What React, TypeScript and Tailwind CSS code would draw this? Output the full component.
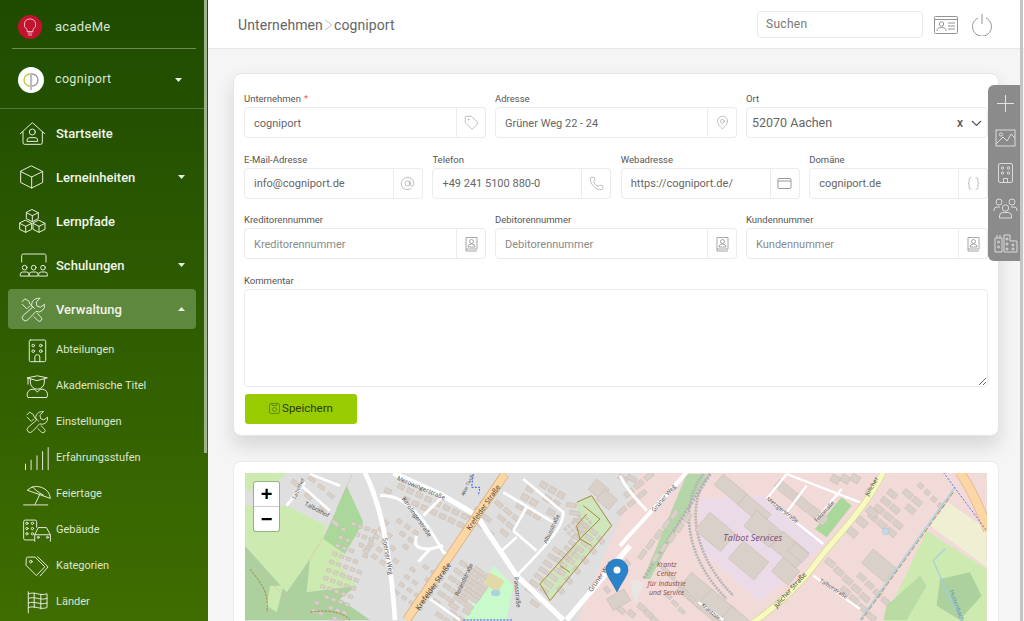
import React from "react";
import { AtSign, Phone, MapPin, Tag, Braces } from "lucide-react";

const F = "font-['Roboto',sans-serif]";

function Ico({ box, w, h, children, sw = 3, className = "" }: { box: string; w: number; h: number; children: React.ReactNode; sw?: number; className?: string }) {
  return (
    <svg viewBox={box} width={w} height={h} fill="none" stroke="currentColor" strokeWidth={sw} strokeLinecap="round" strokeLinejoin="round" className={`shrink-0 ${className}`}>
      {children}
    </svg>
  );
}

const cube = (x: number, y: number, r: number) =>
  `M${x} ${y - r} L${x + r} ${y - r / 2} V${y + r / 2} L${x} ${y + r} L${x - r} ${y + r / 2} V${y - r / 2} Z M${x - r} ${y - r / 2} L${x} ${y} L${x + r} ${y - r / 2} M${x} ${y} V${y + r}`;

const tools =
  "M118 298 a19 19 0 0 0 -15 28 L75 350 a9 9 0 0 0 14 14 L114 338 a19 19 0 0 0 26 -22 l-12 9 -11 -4 -2 -12 l11 -11 z M72 308 l8 -9 l13 8 l2 8 l15 14 M118 344 l12 12 a7 7 0 0 1 -10 10 l-12 -12 M94 322 l-8 8 -14 -14";

const Home = () => (
  <Ico box="55 360 90 75" w={30} h={25}>
    <path d="M62 398 L98 365 L135 398 M70 392 V425 a5 5 0 0 0 5 5 H123 a5 5 0 0 0 5 -5 V392" />
    <circle cx="98" cy="393" r="9" />
    <path d="M82 420 v-3 a8 8 0 0 1 8 -7 h16 a8 8 0 0 1 8 7 v3 z" />
  </Ico>
);
const Cube = () => <Ico box="55 490 90 78" w={30} h={26}><path d={cube(96, 529, 33)} /></Ico>;
const Cubes = () => (
  <Ico box="55 622 90 78" w={30} h={26}>
    <path d={cube(98, 645, 18)} />
    <path d={cube(78, 677, 18)} />
    <path d={cube(118, 677, 18)} />
  </Ico>
);
const Train = () => (
  <Ico box="55 755 90 78" w={30} h={26}>
    <path d="M66 785 V766 a5 5 0 0 1 5 -5 H134 a5 5 0 0 1 5 5 V785" />
    {[75, 102, 130].map((x) => (
      <g key={x}>
        <circle cx={x} cy="802" r="7" />
        <path d={`M${x - 13} 826 v-4 a7 7 0 0 1 7 -7 h12 a7 7 0 0 1 7 7 v4 z`} />
      </g>
    ))}
  </Ico>
);
const Tools = ({ w = 26, h = 27 }: { w?: number; h?: number }) => (
  <Ico box="65 292 80 80" w={w} h={h}><path d={tools} /></Ico>
);
const Bld = () => (
  <Ico box="70 78 70 74" w={23} h={25}>
    <rect x="80" y="83" width="50" height="66" rx="4" />
    {[100, 117].map((y) => [92, 115].map((x) => <circle key={x + "" + y} cx={x} cy={y} r="4" />))}
    <path d="M97 149 V135 a7 7 0 0 1 15 0 V149" />
  </Ico>
);
const Grad = () => (
  <Ico box="68 188 72 74" w={24} h={25}>
    <path d="M75 199 L105 193 L135 199 L105 207 Z M84 203 V212 a21 21 0 0 0 42 0 V203 M77 200 V218" />
    <path d="M76 257 a15 15 0 0 1 29 -15 a15 15 0 0 1 29 15 z" />
  </Ico>
);
const Bars = () => (
  <Ico box="68 400 84 76" w={28} h={25}>
    <path d="M75 472 V455 M92 472 V443 M110 472 V430 M127 472 V417 M144 472 V405" />
  </Ico>
);
const Umbrella = () => (
  <Ico box="68 510 92 76" w={30} h={25}>
    <path d="M85 534 a42 40 0 0 1 70 25 Z M108 578 L124 545 M73 580 H147 M100 524 c6 8 18 18 34 26" />
  </Ico>
);
const Car = () => (
  <Ico box="68 618 92 74" w={30} h={25}>
    <path d="M105 684 H78 a5 5 0 0 1 -5 -5 V628 a5 5 0 0 1 5 -5 H108 a5 5 0 0 1 5 5 V645" />
    {[633, 649, 665].map((y) => [83, 100].map((x) => <circle key={x + "" + y} cx={x} cy={y} r="3.5" />))}
    <path d="M107 688 V668 L118 646 H143 L155 668 V688 M107 668 H155" />
    <circle cx="118" cy="676" r="3" />
    <circle cx="146" cy="676" r="3" />
  </Ico>
);
const Tags = () => (
  <Ico box="66 728 80 70" w={26} h={23}>
    <path d="M73 738 a4 4 0 0 1 4 -4 H100 L130 764 L104 791 L73 760 Z M108 733 L140 764 L116 792" />
    <circle cx="87" cy="748" r="4" />
  </Ico>
);
const Flag = () => (
  <Ico box="70 835 70 72" w={23} h={24}>
    <path d="M77 840 V904 M77 846 c20 -8 36 8 57 0 V888 c-21 8 -37 -8 -57 0 M77 860 c20 -8 36 8 57 0 M77 874 c20 -8 36 8 57 0 M95 844 V888 M115 848 V892" />
  </Ico>
);

function Caret({ up = false }: { up?: boolean }) {
  return (
    <svg width="7" height="4" viewBox="0 0 7 4" className="shrink-0">
      <path d={up ? "M0 4 L3.5 0 L7 4Z" : "M0 0 L7 0 L3.5 4Z"} fill="#e8efe0" />
    </svg>
  );
}

function Nav({ icon, label, caret, active }: { icon: React.ReactNode; label: string; caret?: "up" | "down"; active?: boolean }) {
  return (
    <div className={`flex h-[40px] items-center rounded-[4px] mb-[4px] ml-[8px] w-[188px] pr-[11px] ${active ? "bg-[#5f883f]" : ""}`}>
      <div className="flex w-[48px] justify-center pl-[1px]">{icon}</div>
      <span className="flex-1 pt-[2px] text-[13px] font-medium text-[#f1f5ec]">{label}</span>
      {caret && <Caret up={caret === "up"} />}
    </div>
  );
}

function Sub({ icon, label }: { icon: React.ReactNode; label: string }) {
  return (
    <div className="flex h-[36px] items-center ml-[8px]">
      <div className="flex w-[48px] justify-end pr-[1px]"><div className="flex w-[36px] justify-center">{icon}</div></div>
      <span className="pt-[1px] text-[11px] text-[#dde6d3]">{label}</span>
    </div>
  );
}

function Sidebar() {
  return (
    <aside className="relative h-full w-[208px] shrink-0 overflow-hidden bg-gradient-to-b from-[#1e4b00] to-[#3f6d00] text-[#e6ecde]">
      <div className="mx-[12px] flex h-[49px] w-[184px] items-center border-b border-[#6d8f55] pl-[6px] pt-[6px]">
        <svg width="24" height="24" viewBox="0 0 24 24" className="shrink-0">
          <circle cx="12" cy="12" r="12" fill="#c4132f" />
          <path d="M12 4 a5.6 5.6 0 0 0 -3 10.4 V16.5 H15 V14.4 A5.6 5.6 0 0 0 12 4 Z M9.5 18 H14.5 M10 20 H14" fill="none" stroke="#f6c9cf" strokeWidth="0.9" />
        </svg>
        <span className="ml-[13px] text-[13px] tracking-[0.3px] text-[#dbe5d2]">acadeMe</span>
      </div>
      <div className="flex h-[60px] w-[204px] items-center border-b border-[#53793a] pl-[18px] pr-[22px] pt-[2px]">
        <svg width="26" height="26" viewBox="0 0 26 26" className="shrink-0">
          <circle cx="13" cy="13" r="13" fill="#fff" />
          <path d="M12 7 a6 6 0 1 0 0 12" fill="none" stroke="#b4d334" strokeWidth="1.3" />
          <path d="M14 7 a6 6 0 1 1 0 12 M13 6 V23" fill="none" stroke="#9a9a9a" strokeWidth="1.3" />
        </svg>
        <span className="ml-[11px] flex-1 text-[12.5px] tracking-[0.35px] text-[#dbe5d2]">cogniport</span>
        <Caret />
      </div>
      <div className="pt-[4px]">
        <Nav icon={<Home />} label="Startseite" />
        <Nav icon={<Cube />} label="Lerneinheiten" caret="down" />
        <Nav icon={<Cubes />} label="Lernpfade" />
        <Nav icon={<Train />} label="Schulungen" caret="down" />
        <Nav icon={<Tools />} label="Verwaltung" caret="up" active />
        <div className="-mt-[2px] pt-[1px]">
          <Sub icon={<Bld />} label="Abteilungen" />
          <Sub icon={<Grad />} label="Akademische Titel" />
          <Sub icon={<Tools w={24} h={24} />} label="Einstellungen" />
          <Sub icon={<Bars />} label="Erfahrungsstufen" />
          <Sub icon={<Umbrella />} label="Feiertage" />
          <Sub icon={<Car />} label="Gebäude" />
          <Sub icon={<Tags />} label="Kategorien" />
          <Sub icon={<Flag />} label="Länder" />
        </div>
      </div>
      <div className="absolute right-[1px] top-0 h-[453px] w-[3px] bg-[#9db38b]" />
    </aside>
  );
}

function Field({ label, value, placeholder, icon, req }: { label: string; value?: string; placeholder?: string; icon: React.ReactNode; req?: boolean }) {
  return (
    <div className="min-w-0">
      <div className="h-[15px] text-[9.5px] leading-[14px] text-[#555]">
        {label}
        {req && <span className="ml-[3px] text-[#f0616d]">*</span>}
      </div>
      <div className="flex h-[31px]">
        <input
          readOnly
          defaultValue={value}
          placeholder={placeholder}
          className="h-full min-w-0 flex-1 rounded-l-[4px] border border-[#ebebeb] bg-white pl-[9px] pt-[1px] text-[11px] text-[#666] outline-none placeholder:text-[#8a8a8a]"
        />
        <div className="flex h-full w-[29px] shrink-0 items-center justify-center rounded-r-[4px] border border-l-0 border-[#ebebeb] text-[#9a9a9a]">{icon}</div>
      </div>
    </div>
  );
}

const BookUser = () => (
  <svg width="13" height="16" viewBox="0 0 13 16" fill="none" stroke="#8f8f8f" strokeWidth="0.8">
    <path d="M1 13 V1.5 H12 V13 H1 M1 13 V15 H12" />
    <circle cx="6.5" cy="5.5" r="2" />
    <path d="M3 11 a3.5 3 0 0 1 7 0 z" />
  </svg>
);
const WindowIco = () => (
  <svg width="15" height="13" viewBox="0 0 15 13" fill="none" stroke="#8f8f8f" strokeWidth="0.9">
    <rect x="1" y="1.5" width="13" height="10" rx="1" />
    <path d="M1 4 H14" />
  </svg>
);

function Form() {
  const i = { size: 15, strokeWidth: 1, color: "#999" };
  return (
    <section className="rounded-[8px] border border-[#e6e6e6] bg-white px-[10px] pt-[18px] pb-[11px] shadow-[0_10px_20px_rgba(0,0,0,0.13)]">
      <div className="flex flex-col gap-[14.6px]">
        <div className="grid grid-cols-3 gap-x-[9px]">
          <Field label="Unternehmen" req value="cogniport" icon={<Tag {...i} />} />
          <Field label="Adresse" value="Grüner Weg 22 - 24" icon={<MapPin {...i} />} />
          <div>
            <div className="h-[15px] text-[9.5px] leading-[14px] text-[#555]">Ort</div>
            <div className="flex h-[31px] items-center rounded-[4px] border border-[#ebebeb] pl-[5px] pr-[5px] pt-[1px]">
              <span className="flex-1 text-[12.5px] text-[#666]">52070 Aachen</span>
              <span className="mr-[8px] text-[12px] font-medium text-[#555]">x</span>
              <svg width="11" height="7" viewBox="0 0 11 7" fill="none" stroke="#555" strokeWidth="1.2"><path d="M1 1 L5.5 5.5 L10 1" /></svg>
            </div>
          </div>
        </div>
        <div className="grid grid-cols-4 gap-x-[9.6px]">
          <Field label="E-Mail-Adresse" value="info@cogniport.de" icon={<AtSign {...i} />} />
          <Field label="Telefon" value="+49 241 5100 880-0" icon={<Phone {...i} />} />
          <Field label="Webadresse" value="https://cogniport.de/" icon={<WindowIco />} />
          <Field label="Domäne" value="cogniport.de" icon={<Braces {...i} />} />
        </div>
        <div className="grid grid-cols-3 gap-x-[9px]">
          <Field label="Kreditorennummer" placeholder="Kreditorennummer" icon={<BookUser />} />
          <Field label="Debitorennummer" placeholder="Debitorennummer" icon={<BookUser />} />
          <Field label="Kundennummer" placeholder="Kundennummer" icon={<BookUser />} />
        </div>
        <div>
          <div className="h-[15px] text-[9.5px] leading-[14px] text-[#555]">Kommentar</div>
          <textarea readOnly className="block h-[98px] w-full rounded-[4px] border border-[#ebebeb] bg-white outline-none" />
        </div>
      </div>
      <button className="ml-[1px] mt-[7px] flex h-[30px] w-[112px] items-center justify-center rounded-[3px] bg-[#99cc00] text-[11.5px] text-[#2c3a08]">
        <svg width="11" height="11" viewBox="0 0 11 11" fill="none" stroke="#5c7c0c" strokeWidth="0.8" className="mr-[2px]">
          <rect x="0.5" y="0.5" width="10" height="10" rx="1.5" />
          <path d="M3 0.5 V2.5 H8 V0.5" />
          <circle cx="5.5" cy="6.5" r="2" />
        </svg>
        Speichern
      </button>
    </section>
  );
}

type R = [number, number, number, number, number];
function rows(x0: number, y0: number, dx: number, dy: number, n: number, w: number, h: number, rot: number): R[] {
  return Array.from({ length: n }, (_, k) => [x0 + dx * k, y0 + dy * k, w, h, rot] as R);
}
function lattice(x0: number, y0: number, cols: number, nrows: number, sx: number, sy: number, w: number, h: number, rot: number): R[] {
  const a = (rot * Math.PI) / 180;
  const out: R[] = [];
  for (let r = 0; r < nrows; r++)
    for (let c = 0; c < cols; c++) {
      if ((c * 7 + r * 11) % 9 === 0) continue;
      const px = c * sx;
      const py = r * sy;
      out.push([x0 + px * Math.cos(a) - py * Math.sin(a), y0 + px * Math.sin(a) + py * Math.cos(a), w, h, rot]);
    }
  return out;
}
const Blds = ({ list }: { list: R[] }) => (
  <g fill="#d9d0c9" stroke="#c6b9ae" strokeWidth="1.5">
    {list.map(([x, y, w, h, r], k) => (
      <rect key={k} x={x} y={y} width={w} height={h} transform={`rotate(${r} ${x} ${y})`} />
    ))}
  </g>
);

function MapView() {
  const t5 = "translate(230 380) scale(0.3333)";
  const t6 = "translate(620 440) scale(0.3333)";
  const b5: R[] = [
    ...rows(190, 300, 40, 40, 4, 24, 12, 40),
    ...rows(240, 290, 28, 24, 3, 22, 11, 35),
    ...lattice(345, 420, 5, 12, 22, 26, 14, 10, 20),
    ...lattice(480, 300, 9, 2, 30, 28, 20, 14, 25),
    ...lattice(480, 400, 4, 6, 30, 26, 16, 12, 35),
    ...lattice(560, 540, 4, 5, 28, 28, 16, 10, 35),
    ...lattice(590, 690, 7, 4, 28, 30, 12, 24, -55),
    ...lattice(640, 700, 7, 2, 26, 36, 14, 30, -55),
    ...lattice(775, 340, 4, 4, 34, 28, 26, 13, 40),
    ...lattice(910, 290, 4, 4, 30, 30, 22, 18, 30),
    ...lattice(870, 650, 8, 2, 24, 36, 12, 28, -55),
    ...lattice(960, 560, 8, 2, 22, 30, 12, 22, -52),
    ...rows(1010, 370, 10, 24, 4, 30, 12, 10),
    ...rows(1100, 300, 24, 30, 2, 50, 40, 40),
    ...rows(1110, 470, -24, 30, 6, 24, 14, 50),
    ...rows(1190, 540, -30, 40, 3, 20, 14, 50),
    ...rows(1130, 660, 0, 0, 1, 60, 40, -30),
    ...lattice(1060, 400, 3, 6, 16, 14, 9, 7, 50),
    ...lattice(980, 560, 6, 2, 14, 12, 8, 6, -50),
  ];
  const b6: R[] = [
    ...rows(10, 165, 30, -25, 3, 30, 16, -40),
    ...rows(-10, 220, 30, -25, 3, 30, 14, -40),
    ...rows(0, 105, 26, 0, 2, 30, 14, 30),
    ...rows(70, 330, 24, -30, 5, 14, 30, 35),
    ...rows(110, 340, 24, -30, 5, 14, 30, 35),
    ...rows(270, 220, 100, 85, 2, 100, 70, 40),
    ...rows(310, 105, 70, 60, 2, 95, 42, 40),
    ...rows(410, 215, 80, 62, 2, 100, 60, 40),
    ...rows(215, 400, 60, 50, 3, 90, 70, 40),
    ...rows(480, 120, 50, 40, 3, 60, 28, 40),
    ...rows(640, 105, 30, -1, 3, 26, 22, 30),
    ...rows(525, 310, 0, 0, 1, 55, 34, 40),
    ...rows(490, 355, 0, 0, 1, 65, 55, 40),
    ...lattice(830, 125, 3, 5, 36, 30, 30, 18, 40),
    ...rows(760, 330, 50, 34, 1, 90, 55, 40),
    ...rows(690, 260, 30, -30, 3, 34, 22, 40),
    ...rows(625, 355, 26, 26, 5, 30, 18, 40),
    ...rows(670, 440, 26, 26, 4, 30, 16, 40),
    ...rows(720, 400, 24, 24, 4, 26, 16, 40),
    ...rows(130, 380, 20, 22, 5, 22, 11, 40),
    ...rows(140, 460, 20, 22, 3, 22, 11, 40),
    ...rows(60, 490, 20, 20, 3, 28, 16, 40),
    ...rows(0, 500, 30, 10, 2, 24, 16, 40),
    ...rows(900, 130, 20, 20, 4, 16, 14, 40),
  ];
  return (
    <svg viewBox="245 474 742 300" width="742" height="300" className="block">
      <rect x="245" y="474" width="742" height="300" fill="#e0dfdf" />
      <polygon points="640,474 987,474 987,774 520,774 590,590" fill="#f2dad9" />
      <g transform={t5}>
        <polygon points="45,280 170,280 100,350 45,330" fill="#cdebb0" />
        <polygon points="45,380 170,380 290,440 280,470 340,520 330,560 380,620 230,640 240,540 170,640 45,500" fill="#cdebb0" />
        <polygon points="45,500 170,640 240,540 230,640 380,620 330,660 420,723 45,723" fill="#add19e" />
        <polygon points="350,320 400,430 345,525 280,480 320,390" fill="#a9d89a" />
        <polygon points="120,620 160,620 140,700 110,680" fill="#cdebb0" />
        <polygon points="700,723 790,560 850,620 830,723" fill="#c8facc" />
        <polygon points="1040,370 1085,350 1145,440 960,665 930,615 1050,480" fill="#cfe5bd" />
        <Blds list={b5} />
        <path d="M365 290 L320 390 M300 440 L240 540" stroke="#e49a9a" strokeWidth="2" strokeDasharray="4 4" fill="none" />
        <path d="M45 510 C100 590 130 620 170 660 L180 723" stroke="#e0a8a8" strokeWidth="2" strokeDasharray="4 3" fill="none" />
        <path d="M60 570 C90 610 120 640 110 700 M240 700 C290 690 340 700 360 723" stroke="#a87a3a" strokeWidth="2.5" strokeDasharray="8 3" fill="none" />
        <path d="M405 282 C450 370 480 500 495 723" stroke="#fff" strokeWidth="14" fill="none" />
        <path d="M490 282 L640 350 L740 410 L860 590 L1000 723" stroke="#fff" strokeWidth="16" fill="none" />
        <path d="M450 350 C510 345 570 390 640 520 L660 530 M640 350 L580 410 M560 470 C550 500 560 510 600 510 L565 548 M600 510 L640 500" stroke="#fff" strokeWidth="9" fill="none" />
        <path d="M170 380 L225 310 M240 285 L330 320 M215 320 L300 395 M880 300 L1000 400 C1000 430 990 460 860 590 M850 455 L920 515 M850 455 L890 385 M820 340 L970 430 M815 515 L860 475" stroke="#fff" strokeWidth="8" fill="none" />
        <path d="M600 660 L690 723" stroke="#fff" strokeWidth="8" fill="none" />
        <path d="M825 285 L530 723" stroke="#d6a86e" strokeWidth="27" fill="none" />
        <path d="M825 285 L530 723" stroke="#fcd6a4" strokeWidth="23" fill="none" />
        <g stroke="#a8892f" strokeWidth="3" fill="none">
          <path d="M1040 370 L1085 350 L1145 440 L960 665 L930 615 L1050 480 L1040 440 L1070 405 M1060 380 L1110 420 M1050 480 L1085 500 M990 560 L1020 580 M1050 480 L1110 420" />
        </g>
        <rect x="780" y="580" width="50" height="40" fill="#e2d9a8" transform="rotate(30 780 580)" />
        <ellipse cx="797" cy="642" rx="14" ry="10" fill="#aad3df" />
        <path d="M700 723 H850" stroke="#3a5fe0" strokeWidth="3" strokeDasharray="6 4" fill="none" />
        <path d="M730 285 L725 325 H750 L745 350" stroke="#3a5fe0" strokeWidth="3" strokeDasharray="6 4" fill="none" />
        <path d="M1200 500 L1010 723" stroke="#fff" strokeWidth="16" fill="none" />
        <g fontFamily="'Open Sans',sans-serif" fill="#444" fontSize="20" stroke="none">
          <text transform="translate(196 362) rotate(-65)" fontSize="15">Talbothof</text>
          <text transform="translate(222 378) rotate(28)" fontSize="18">Talbothof</text>
          <text transform="translate(500 302) rotate(23)" fontSize="18">Merowingerstraße</text>
          <text transform="translate(515 360) rotate(55)" fontSize="18">Karolingerstraße</text>
          <text transform="translate(458 478) rotate(80)" fontSize="19">Soerser Weg</text>
          <text transform="translate(720 455) rotate(-55)" fontSize="21" fill="#333">Krefelder Straße</text>
          <text transform="translate(568 695) rotate(-55)" fontSize="22" fill="#333">Krefelder Straße</text>
          <text transform="translate(685 652) rotate(-65)" fontSize="17">Rolandstraße</text>
          <text transform="translate(852 595) rotate(85)" fontSize="18">Passstraße</text>
          <text transform="translate(950 495) rotate(-65)" fontSize="17">Albusstraße</text>
          <text transform="translate(702 352) rotate(-65)" fontSize="14">Alter Tivoli</text>
          <text transform="translate(1085 640) rotate(-55)" fontSize="19">Grüner Weg</text>
        </g>
      </g>
      <g transform={t6}>
        <polygon points="240,180 430,170 620,310 420,490 240,330" fill="#ebdbe8" />
        <polygon points="920,275 1100,390 1100,700 720,700" fill="#cdebb0" />
        <polygon points="930,260 985,190 1100,270 1100,385" fill="#eeefd3" />
        <polygon points="960,420 1050,400 1085,470 1020,543 950,500" fill="#add19e" />
        <polygon points="800,500 900,410 920,440 860,543 790,543" fill="#b9dca5" />
        <polygon points="585,270 665,175 695,200 620,295" fill="#a9d89a" />
        <polygon points="70,420 200,105 260,105 90,420" fill="#b5d6a8" />
        <path d="M270 105 C200 180 210 340 340 470 M250 105 C180 190 190 350 320 480" stroke="#b5b5b5" strokeWidth="8" strokeDasharray="6 3" fill="none" />
        <path d="M270 105 L70 420" stroke="#b4b4b4" strokeWidth="10" strokeDasharray="7 4" fill="none" />
        <Blds list={b6} />
        <path d="M0 320 L200 100" stroke="#fff" strokeWidth="12" fill="none" />
        <path d="M0 110 C30 170 60 190 80 215" stroke="#fff" strokeWidth="9" fill="none" />
        <path d="M500 105 L720 190 M500 105 L440 180 M560 140 L500 220 M665 150 L590 240 M440 180 L610 315 M580 410 L720 510 M235 490 L310 543" stroke="#fff" strokeWidth="7" fill="none" />
        <path d="M790 100 C730 220 640 300 590 370 C540 440 460 510 400 550" stroke="#d5d59a" strokeWidth="20" fill="none" />
        <path d="M790 100 C730 220 640 300 590 370 C540 440 460 510 400 550" stroke="#f7fabf" strokeWidth="16" fill="none" />
        <path d="M1005 145 L720 543" stroke="#a9d3df" strokeWidth="5" fill="none" />
        <path d="M1000 160 L725 543" stroke="#a87a3a" strokeWidth="2.5" strokeDasharray="16 6" fill="none" />
        <path d="M975 330 L940 365 L985 470 L1030 543" stroke="#a3cbe4" strokeWidth="3.5" fill="none" />
        <path d="M1020 100 C1060 160 1085 220 1105 275" stroke="#e0b07e" strokeWidth="30" fill="none" />
        <path d="M1020 100 C1060 160 1085 220 1105 275" stroke="#fcd6a4" strokeWidth="26" fill="none" />
        <path d="M970 100 L1100 275" stroke="#3a5fe0" strokeWidth="2.5" strokeDasharray="6 5" fill="none" />
        <circle cx="797" cy="277" r="10" fill="#c8d8ea" stroke="#9ab" strokeWidth="1" />
        <polygon points="30,420 75,430 45,495" fill="#e8e6e3" />
        <g fontFamily="'Open Sans',sans-serif" stroke="none" fontSize="18" fill="#444">
          <text transform="translate(103 220) rotate(-50)">Grüner Weg</text>
          <text transform="translate(438 182) rotate(38)" fontSize="17">Metzgerstraße</text>
          <text transform="translate(590 250) rotate(-47)" fontSize="16">Feldstraße</text>
          <text transform="translate(470 508) rotate(-48)" fontSize="20" fill="#333">Jülicher Straße</text>
          <text transform="translate(745 172) rotate(-60)" fontSize="18" fill="#333">Jülicher</text>
          <text transform="translate(598 428) rotate(33)" fontSize="16">Talbotstraße</text>
          <text transform="translate(243 500) rotate(40)" fontSize="16">Krantzstr</text>
          <text transform="translate(988 455) rotate(70)" fontSize="18" fill="#5a8fc0">Huttenbach</text>
          <text x="310" y="307" fontSize="27" fontStyle="italic" fill="#734a78">Talbot Services</text>
          <g fontSize="21" fontStyle="italic" fill="#8e4a4a" textAnchor="middle">
            <text x="140" y="384">Krantz</text>
            <text x="140" y="412">Center</text>
            <text x="140" y="441">für Industrie</text>
            <text x="140" y="469">und Service</text>
          </g>
        </g>
      </g>
      <path d="M617 593 C612 583 606 576 606 571 a11 11 0 0 1 22 0 C628 576 622 583 617 593 Z" fill="#2a82c9" stroke="#1f6ba8" strokeWidth="0.5" />
      <circle cx="617" cy="571" r="3.5" fill="#fff" />
    </svg>
  );
}

function MapCard() {
  return (
    <section className="mt-[25px] rounded-[8px] border border-[#ececec] bg-white p-[11px] pr-[11px]">
      <div className="relative h-[300px] overflow-hidden">
        <MapView />
        <div className="absolute left-[9px] top-[9px] w-[25px] rounded-[2px] bg-white shadow-[0_0_0_1px_rgba(0,0,0,0.25)] font-['Liberation_Sans',sans-serif] text-black">
          <div className="flex h-[25px] items-center justify-center border-b border-[#ccc] text-[20px] font-bold leading-none">+</div>
          <div className="flex h-[24px] items-center justify-center text-[20px] font-bold leading-none">−</div>
        </div>
      </div>
    </section>
  );
}

function FloatPanel() {
  return (
    <div className="absolute right-[1px] top-[85px] flex h-[176px] w-[35px] flex-col items-center justify-between rounded-l-[6px] bg-[#8b8b8b] pb-[8px] pt-[10px] text-[#e4e4e4]">
      <svg width="17" height="17" viewBox="0 0 17 17" stroke="currentColor" strokeWidth="1"><path d="M8.5 0 V17 M0 8.5 H17" /></svg>
      <svg width="21" height="18" viewBox="0 0 21 18" fill="none" stroke="currentColor" strokeWidth="0.9" className="mt-[2px]"><rect x="1" y="1" width="19" height="16" /><circle cx="6" cy="5.5" r="1.6" /><path d="M1 15 L8 8 L12 12 L16 5 L20 9" /></svg>
      <svg width="15" height="20" viewBox="0 0 15 20" fill="none" stroke="currentColor" strokeWidth="0.9"><rect x="0.5" y="0.5" width="14" height="19" rx="1.5" /><circle cx="4.5" cy="5" r="1.2" /><circle cx="10.5" cy="5" r="1.2" /><circle cx="4.5" cy="10" r="1.2" /><circle cx="10.5" cy="10" r="1.2" /><path d="M5.5 19.5 V15.5 H9.5 V19.5" /></svg>
      <svg width="25" height="21" viewBox="0 0 25 21" fill="none" stroke="currentColor" strokeWidth="0.9"><circle cx="6" cy="4" r="3" /><circle cx="19" cy="4" r="3" /><circle cx="12.5" cy="10" r="3.2" /><path d="M1 13 v-1 a3 3 0 0 1 3 -3 h3 M24 13 v-1 a3 3 0 0 0 -3 -3 h-3 M6.5 20 v-2 a3.5 3.5 0 0 1 3.5 -3.5 h5 a3.5 3.5 0 0 1 3.5 3.5 v2 z" /></svg>
      <svg width="24" height="19" viewBox="0 0 24 19" fill="none" stroke="currentColor" strokeWidth="0.9"><path d="M1 18 V4 H8 V18 Z M3 4 V1 M6 4 V1 M10 18 V1 H16 V7 H23 V18 Z" /><circle cx="4.5" cy="8" r="1" /><circle cx="4.5" cy="13" r="1" /><circle cx="13" cy="5" r="1" /><circle cx="13" cy="10" r="1" /><circle cx="13" cy="15" r="1" /><circle cx="19" cy="11" r="1" /><circle cx="19" cy="15" r="1" /></svg>
    </div>
  );
}

export default function App() {
  return (
    <div className={`${F} relative flex h-[621px] w-[1024px] overflow-hidden bg-[#f5f5f5]`}>
      <Sidebar />
      <main className="min-w-0 flex-1">
        <header className="flex h-[49px] items-center border-b border-[#e8e8e8] bg-white pl-[30px] pr-[32px]">
          <div className="flex flex-1 items-center pt-[2px] text-[14px] tracking-[0.1px] text-[#666]">
            Unternehmen
            <svg width="9" height="12" viewBox="0 0 9 12" fill="none" stroke="#bbb" strokeWidth="0.9" className="mx-[1px]"><path d="M1 1 L8 6 L1 11" /></svg>
            cogniport
          </div>
          <input readOnly placeholder="Suchen" className="h-[27px] w-[166px] rounded-[4px] border border-[#ebebeb] pl-[8px] text-[12px] tracking-[0.3px] outline-none placeholder:text-[#777]" />
          <svg width="24" height="18" viewBox="0 0 24 18" fill="none" stroke="#888" strokeWidth="0.9" className="ml-[11px] mt-[2px]">
            <rect x="0.5" y="0.5" width="23" height="17" rx="1" />
            <path d="M0.5 3.5 H23.5" />
            <circle cx="7.5" cy="8" r="2.2" />
            <path d="M3 15 a4.5 3.5 0 0 1 9 0 M14 7 H21 M14 10 H21 M14 13 H21" />
          </svg>
          <svg width="20" height="22" viewBox="0 0 20 22" fill="none" stroke="#888" strokeWidth="0.9" className="ml-[14px] mt-[2px]">
            <path d="M6 4 a9.5 9.5 0 1 0 8 0 M10 0 V10" />
          </svg>
        </header>
        <div className="px-[25px] pt-[24px]">
          <Form />
          <MapCard />
        </div>
      </main>
      <FloatPanel />
      <div className="absolute right-[1px] top-0 h-full w-[3px] bg-[#c4c4c4]" />
    </div>
  );
}
